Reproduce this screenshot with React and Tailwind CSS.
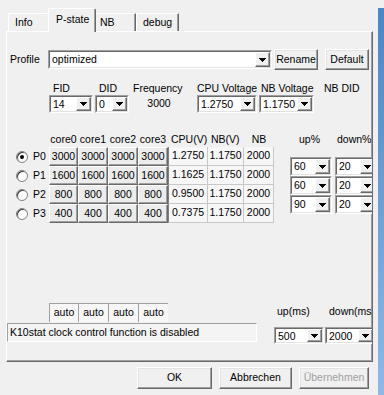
import React from "react";

const Arrow = () => (
  <svg width="7" height="4" viewBox="0 0 7 4" shapeRendering="crispEdges">
    <rect x="0" y="0" width="7" height="1" fill="#000" />
    <rect x="1" y="1" width="5" height="1" fill="#000" />
    <rect x="2" y="2" width="3" height="1" fill="#000" />
    <rect x="3" y="3" width="1" height="1" fill="#000" />
  </svg>
);

const Combo = ({ value, className }) => (
  <div className={"flex shrink-0 border border-t-[#a0a0a0] border-l-[#a0a0a0] border-r-white border-b-white " + className}>
    <div className="flex flex-1 min-w-0 border border-t-[#696969] border-l-[#696969] border-r-[#e3e3e3] border-b-[#e3e3e3] bg-white">
      <div className="flex-1 min-w-0 pl-[2px] leading-[14px] overflow-hidden whitespace-nowrap">{value}</div>
      <div className="w-[15px] shrink-0 flex items-center justify-center bg-[#f0f0f0] border border-t-white border-l-white border-r-[#696969] border-b-[#696969] shadow-[inset_-1px_-1px_0_#a0a0a0]">
        <Arrow />
      </div>
    </div>
  </div>
);

const Btn = ({ children, className, disabled }) => (
  <div className={"flex items-center justify-center shrink-0 bg-[#f0f0f0] border border-t-white border-l-white border-r-[#696969] border-b-[#696969] shadow-[inset_-1px_-1px_0_#a0a0a0,inset_1px_1px_0_#e3e3e3] " + (disabled ? "text-[#a0a0a0] " : "text-black ") + className}>
    {children}
  </div>
);

const CoreCell = ({ v, w }) => (
  <div className={"flex items-center justify-center shrink-0 h-full bg-[#ececec] border border-t-white border-l-white border-r-[#696969] border-b-[#696969] shadow-[inset_-1px_-1px_0_#a0a0a0] " + w}>
    {v}
  </div>
);

const ValCell = ({ v, w }) => (
  <div className={"flex items-center justify-center shrink-0 h-full bg-[#f7f7f7] border-r border-b border-[#c8c8c8] " + w}>
    {v}
  </div>
);

const Radio = ({ checked }) => (
  <div className="w-[12px] h-[12px] rounded-full bg-white border border-[#808080] flex items-center justify-center shadow-[inset_1px_1px_0_#404040]">
    {checked && <div className="w-[4px] h-[4px] rounded-full bg-black" />}
  </div>
);

const rows = [
  { p: "P0", c: "3000", cpu: "1.2750", up: "60", sel: true },
  { p: "P1", c: "1600", cpu: "1.1625", up: "60" },
  { p: "P2", c: "800", cpu: "0.9500", up: "90" },
  { p: "P3", c: "400", cpu: "0.7375" },
];

export default function App() {
  return (
    <div className="w-[384px] h-[395px] bg-[#f0f0f0] flex overflow-hidden text-[10.5px] text-black font-['Liberation_Sans','DejaVu_Sans',sans-serif]">
      <div className="w-[378px] shrink-0 flex flex-col pl-[6px] pt-[8px]">
        {/* tabs */}
        <div className="h-[23px] flex items-end pl-[2px] relative z-10">
          <div className="w-[41px] h-[18px] flex items-center pl-[6px] border-t border-l border-t-white border-l-white border-r border-r-[#696969] rounded-t-[2px]">Info</div>
          <div className="w-[48px] h-[24px] -mb-[1px] -ml-[1px] flex items-start pt-[3px] pl-[7px] bg-[#f0f0f0] border-t border-l border-t-white border-l-white border-r border-r-[#696969] shadow-[inset_-1px_0_0_#a0a0a0] rounded-t-[2px]">P-state</div>
          <div className="w-[40px] h-[18px] flex items-center pl-[4px] border-t border-t-white border-r border-r-[#696969] shadow-[inset_-1px_0_0_#a0a0a0]">NB</div>
          <div className="w-[43px] h-[18px] flex items-center pl-[6px] border-t border-l border-t-white border-l-white border-r border-r-[#696969] shadow-[inset_-1px_0_0_#a0a0a0]">debug</div>
        </div>
        {/* panel */}
        <div className="w-[367px] h-[331px] border border-t-white border-l-white border-r-[#696969] border-b-[#696969] shadow-[inset_-1px_-1px_0_#a0a0a0] overflow-hidden flex flex-col">
          {/* profile row */}
          <div className="mt-[17px] h-[21px] flex items-center">
            <div className="w-[41px] pl-[3px] shrink-0">Profile</div>
            <Combo value="optimized" className="w-[224px] h-[19px]" />
            <Btn className="ml-[2px] w-[44px] h-[21px]">Rename</Btn>
            <Btn className="ml-[7px] w-[44px] h-[21px]">Default</Btn>
          </div>
          {/* labels row */}
          <div className="mt-[12px] h-[13px] flex items-center whitespace-nowrap">
            <div className="w-[42px] shrink-0" />
            <div className="w-[46px] pl-[4px] shrink-0">FID</div>
            <div className="w-[36px] pl-[4px] shrink-0">DID</div>
            <div className="w-[66px] pl-[2px] shrink-0">Frequency</div>
            <div className="w-[62px] shrink-0">CPU Voltage</div>
            <div className="w-[63px] pl-[2px] shrink-0">NB Voltage</div>
            <div className="pl-[2px]">NB DID</div>
          </div>
          {/* controls row */}
          <div className="h-[18px] flex">
            <div className="w-[42px] shrink-0" />
            <Combo value="14" className="w-[44px] h-[18px]" />
            <Combo value="0" className="ml-[2px] w-[34px] h-[18px]" />
            <div className="ml-[2px] w-[56px] h-[18px] flex items-center justify-center shrink-0">3000</div>
            <Combo value="1.2750" className="ml-[10px] w-[60px] h-[18px]" />
            <Combo value="1.1750" className="ml-[2px] w-[55px] h-[18px]" />
          </div>
          {/* grid section */}
          <div className="mt-[20px] flex">
            <div className="flex flex-col shrink-0">
              <div className="h-[14px] flex items-center whitespace-nowrap">
                <div className="w-[42px] shrink-0" />
                <div className="w-[29px] text-center shrink-0">core0</div>
                <div className="w-[30px] text-center shrink-0">core1</div>
                <div className="w-[30px] text-center shrink-0">core2</div>
                <div className="w-[30px] text-center shrink-0">core3</div>
                <div className="w-[40px] pl-[3px] shrink-0">CPU(V)</div>
                <div className="w-[36px] pl-[3px] shrink-0">NB(V)</div>
                <div className="w-[30px] text-center shrink-0">NB</div>
              </div>
              {rows.map((r) => (
                <div key={r.p} className="h-[19px] flex">
                  <div className="w-[42px] shrink-0 flex items-center">
                    <div className="ml-[9px]">
                      <Radio checked={r.sel} />
                    </div>
                    <div className="ml-[5px]">{r.p}</div>
                  </div>
                  <CoreCell v={r.c} w="w-[29px]" />
                  <CoreCell v={r.c} w="w-[30px]" />
                  <CoreCell v={r.c} w="w-[30px]" />
                  <CoreCell v={r.c} w="w-[30px]" />
                  <div className="w-[40px] h-full shrink-0 flex items-center pl-[3px] bg-[#f7f7f7] border-l border-l-[#808080] border-r border-b border-[#c8c8c8]">{r.cpu}</div>
                  <ValCell v="1.1750" w="w-[36px]" />
                  <ValCell v="2000" w="w-[30px]" />
                </div>
              ))}
            </div>
            <div className="ml-[16px] flex flex-col shrink-0">
              <div className="h-[14px] flex items-center whitespace-nowrap">
                <div className="w-[45px] pl-[9px] shrink-0">up%</div>
                <div className="pl-[2px]">down%</div>
              </div>
              <div className="mt-[10px] flex flex-col">
                {rows.slice(0, 3).map((r, i) => (
                  <div key={i} className="flex h-[19px]">
                    <Combo value={r.up} className="w-[42px] h-[19px]" />
                    <Combo value="20" className="ml-[3px] w-[42px] h-[19px]" />
                  </div>
                ))}
              </div>
            </div>
          </div>
          {/* bottom */}
          <div className="mt-[80px] flex">
            <div className="flex flex-col shrink-0">
              <div className="h-[19px] flex">
                <div className="w-[42px] shrink-0" />
                {["w-[29px]", "w-[30px]", "w-[30px]", "w-[30px]"].map((w, i) => (
                  <div key={i} className={"h-full flex items-center justify-center bg-[#f7f7f7] border-t border-l border-[#a0a0a0] " + w}>auto</div>
                ))}
              </div>
              <div className="mt-[1px] w-[250px] h-[19px] flex items-center pl-[2px] bg-[#f4f4f4] border border-t-[#a0a0a0] border-l-[#a0a0a0] border-r-white border-b-white whitespace-nowrap">
                K10stat clock control function is disabled
              </div>
            </div>
            <div className="ml-[17px] flex flex-col shrink-0">
              <div className="h-[16px] mt-[1px] flex items-center whitespace-nowrap">
                <div className="w-[52px] pl-[3px] shrink-0">up(ms)</div>
                <div className="pl-[3px]">down(ms)</div>
              </div>
              <div className="mt-[7px] flex">
                <Combo value="500" className="w-[50px] h-[17px]" />
                <Combo value="2000" className="ml-[1px] w-[50px] h-[17px]" />
              </div>
            </div>
          </div>
        </div>
        {/* buttons */}
        <div className="mt-[5px] flex">
          <Btn className="ml-[131px] w-[75px] h-[22px]">OK</Btn>
          <Btn className="ml-[7px] w-[73px] h-[22px]">Abbrechen</Btn>
          <Btn disabled className="ml-[7px] w-[70px] h-[22px]">Übernehmen</Btn>
        </div>
      </div>
      <div className="mt-[8px] w-[6px] shrink-0 bg-gradient-to-b from-[#4a86c5] to-[#8fb9e3]" />
    </div>
  );
}
